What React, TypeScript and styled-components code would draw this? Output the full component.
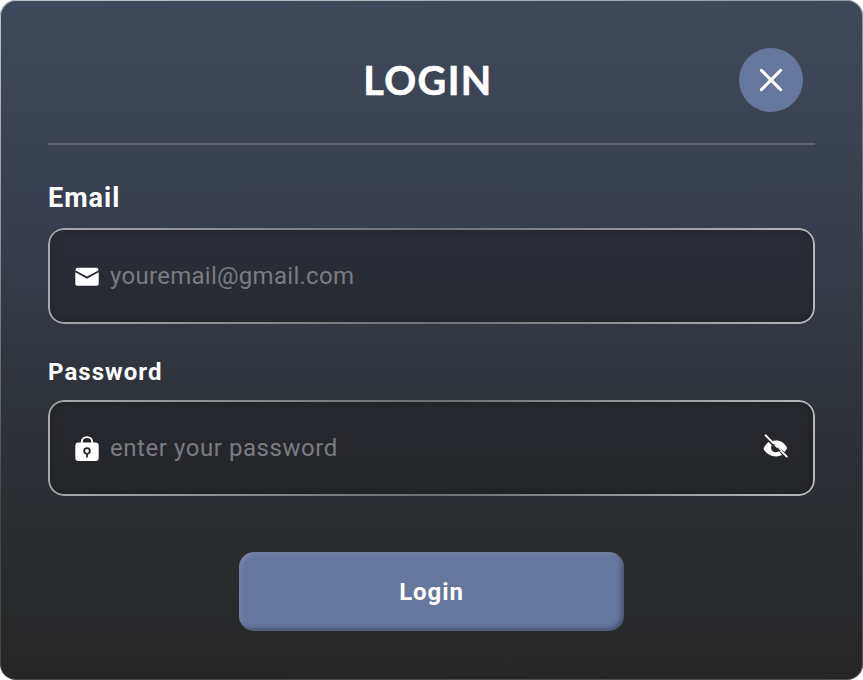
import React from "react";
import styled, { createGlobalStyle, css } from "styled-components";

const Global = createGlobalStyle`
  * { box-sizing: border-box; }
  body { margin: 0; background: #fff; font-family: Roboto, "Liberation Sans", sans-serif; }
`;

/* Gradient stroke drawn just inside the edge of a rounded box. */
const gradientStroke = (width: number, gradient: string) => css`
  &::before {
    content: "";
    position: absolute;
    inset: 0;
    border-radius: inherit;
    padding: ${width}px;
    background: ${gradient};
    mask: linear-gradient(#000 0 0) content-box exclude, linear-gradient(#000 0 0);
    pointer-events: none;
  }
`;

const Card = styled.main`
  position: relative;
  display: flex;
  flex-direction: column;
  width: 863px;
  height: 680px;
  padding: 48px;
  border-radius: 16px;
  background: linear-gradient(180deg, #3f485a 0%, #394050 27%, #2e3239 60%, #262626 100%);
  ${gradientStroke(1, "linear-gradient(165deg, rgba(255,255,255,.68) 0%, rgba(255,255,255,.5) 20%, rgba(255,255,255,.12) 55%, rgba(255,255,255,.2) 100%)")}
`;

const Header = styled.header`
  display: grid;
  grid-template-columns: 64px 1fr 64px;
  align-items: center;
  height: 97px;
  padding: 0 12px 33px 0;
  border-bottom: 2px solid #5d6372;
`;

const Title = styled.h1`
  grid-column: 2;
  margin: 0;
  padding: 0 0 1px 5px;
  text-align: center;
  color: #fff;
  font: 700 39.5px/62px Lato, sans-serif;
  letter-spacing: 1.4px;
  -webkit-text-stroke: 0.6px #fff;
`;

const CloseButton = styled.button`
  display: grid;
  place-items: center;
  width: 64px;
  height: 64px;
  padding: 0;
  border: 0;
  border-radius: 50%;
  background: #64779d;
`;

const Field = styled.div<{ $gap: number; $top: number }>`
  display: flex;
  flex-direction: column;
  gap: ${(p) => p.$gap}px;
  margin-top: ${(p) => p.$top}px;
`;

const Label = styled.label<{ $size: number; $tracking: number }>`
  color: #fff;
  font-size: ${(p) => p.$size}px;
  font-weight: 700;
  line-height: 32px;
  letter-spacing: ${(p) => p.$tracking}px;
`;

const InputBox = styled.div`
  position: relative;
  display: flex;
  align-items: center;
  height: 96px;
  padding: 0 26px;
  border-radius: 16px;
  background: rgba(29, 29, 34, 0.5);
  box-shadow: inset 0 0 8px 2px rgba(0, 0, 0, 0.22);
  ${gradientStroke(2, "linear-gradient(90deg, #a6a8aa 0%, #6c6f74 50%, #b7b8ba 100%)")}
`;

const Input = styled.input<{ $tracking: number }>`
  flex: 1;
  min-width: 0;
  height: 32px;
  margin-left: 10px;
  padding: 0;
  border: 0;
  outline: 0;
  background: none;
  color: #fff;
  font: 400 24px/32px Roboto, sans-serif;
  letter-spacing: ${(p) => p.$tracking}px;
  &::placeholder { color: #7b7c81; opacity: 1; }
`;

const Submit = styled.button`
  align-self: center;
  width: 385px;
  height: 79px;
  margin-top: 56px;
  padding: 0;
  border: 0;
  border-radius: 15px;
  background: #64779d;
  color: #fff;
  font: 700 24px/32px Roboto, sans-serif;
  letter-spacing: 0.9px;
  box-shadow: inset -2px -2px 5px rgba(0, 0, 0, 0.35), inset 2px 2px 5px rgba(255, 255, 255, 0.16);
`;

const CloseIcon = () => (
  <svg width="24" height="24" viewBox="0 0 24 24" fill="none" stroke="#fff" strokeWidth="3" strokeLinecap="round">
    <path d="M2.400 2.400l19.200 19.200M21.600 2.400l-19.200 19.200" />
  </svg>
);

const MailIcon = () => (
  <svg width="26" height="26" viewBox="0 0 26 26" fill="#fff">
    <path d="M3.600 4.700h18.800a2 2 0 0 1 2 2v.7L13 13.600 1.600 7.400v-.7a2 2 0 0 1 2-2z" />
    <path d="M1.300 9.200L13 15.700l11.700-6.500v11.500a2 2 0 0 1-2 2H3.300a2 2 0 0 1-2-2z" />
  </svg>
);

const LockIcon = () => (
  <svg width="26" height="28" viewBox="0 0 26 28" fill="#fff">
    <path d="M7.800 9V7.900C7.800 5 10 3.100 13 3.100s5.200 1.900 5.200 4.800V9" fill="none" stroke="#fff" strokeWidth="1.900" />
    <path
      fillRule="evenodd"
      d="M4.500 8.600h17a3.200 3.200 0 0 1 3.200 3.200v12a3.200 3.200 0 0 1-3.200 3.200h-17a3.200 3.200 0 0 1-3.200-3.200v-12a3.200 3.200 0 0 1 3.200-3.200zM13 13.300a3.700 3.700 0 0 0-.9 7.300v2.900h1.800v-2.900A3.700 3.700 0 0 0 13 13.300z"
    />
    <circle cx="13" cy="17" r="1.900" />
  </svg>
);

const EyeIconSvg = styled.svg`
  margin-bottom: 5px;
`;

const EyeOffIcon = () => (
  <EyeIconSvg width="26" height="26" viewBox="0 0 26 26" fill="#fff">
    <path d="M2.600 2.400L23.800 23.600" fill="none" stroke="#fff" strokeWidth="2" strokeLinecap="round" />
    <path d="M8.600 8.400C9.900 7.700 11.500 7.400 13 7.400c4.700 0 8.500 2.700 10.700 6.500.4.700.4 1.300 0 2-.7 1.200-1.500 2.200-2.300 3z" />
    <path d="M5.800 9.100l3.100 3.100c-1.700 2.700-.7 6.900 4.100 7 1.300 0 2.300-.5 3-1.100l3 4c-1.800.8-3.800 1.300-5.800 1.300-5.200 0-10-3-12.300-6.700a1.900 1.900 0 0 1 0-2c1.200-2.200 2.900-4.300 4.900-5.600z" />
    <path d="M9.300 12.300L10.900 10.900l.9.900c-1.200 1.400-.8 3.200.9 3.500l1.700-.9 3.300 3.300-1.300.9-.7-.7c-3 1.800-7-.6-6.400-4.600z" fill="#25272b" />
  </EyeIconSvg>
);

export default function App() {
  return (
    <>
      <Global />
      <Card>
        <Header>
          <Title>LOGIN</Title>
          <CloseButton aria-label="Close"><CloseIcon /></CloseButton>
        </Header>
        <Field $gap={14} $top={37}>
          <Label htmlFor="email" $size={27} $tracking={1}>Email</Label>
          <InputBox>
            <MailIcon />
            <Input id="email" type="email" placeholder="youremail@gmail.com" $tracking={0.28} />
          </InputBox>
        </Field>
        <Field $gap={12} $top={32}>
          <Label htmlFor="password" $size={24} $tracking={1.05}>Password</Label>
          <InputBox>
            <LockIcon />
            <Input id="password" type="password" placeholder="enter your password" $tracking={0.55} />
            <EyeOffIcon />
          </InputBox>
        </Field>
        <Submit type="submit">Login</Submit>
      </Card>
    </>
  );
}
